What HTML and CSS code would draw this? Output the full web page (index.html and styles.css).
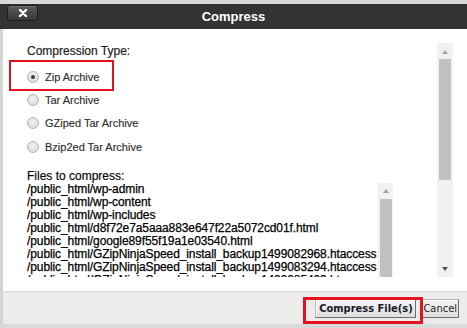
FILE: index.html
```html
<!DOCTYPE html>
<html>
<head>
<meta charset="utf-8">
<title>Compress</title>
<link rel="stylesheet" href="styles.css">
</head>
<body>
<div class="dialog">
  <header class="titlebar">
    <button class="close" type="button" aria-label="Close">
      <svg width="10" height="10" viewBox="0 0 10 10"><path d="M2 2 L8 8 M8 2 L2 8" stroke="#fff" stroke-width="2.4" stroke-linecap="round"/></svg>
    </button>
    <h1 class="title">Compress</h1>
    <span class="spacer"></span>
  </header>
  <main class="body">
    <div class="scroller">
      <div class="content">
        <p class="heading">Compression Type:</p>
        <ul class="options">
          <li class="option"><span class="radio checked"></span><span class="label">Zip Archive</span></li>
          <li class="option"><span class="radio"></span><span class="label">Tar Archive</span></li>
          <li class="option"><span class="radio"></span><span class="label">GZiped Tar Archive</span></li>
          <li class="option"><span class="radio"></span><span class="label">Bzip2ed Tar Archive</span></li>
        </ul>
        <p class="heading files-heading">Files to compress:</p>
        <div class="filebox">
          <ul class="files">
            <li>/public_html/wp-admin</li>
            <li>/public_html/wp-content</li>
            <li>/public_html/wp-includes</li>
            <li>/public_html/d8f72e7a5aaa883e647f22a5072cd01f.html</li>
            <li>/public_html/google89f55f19a1e03540.html</li>
            <li>/public_html/GZipNinjaSpeed_install_backup1499082968.htaccess</li>
            <li>/public_html/GZipNinjaSpeed_install_backup1499083294.htaccess</li>
            <li>/public_html/GZipNinjaSpeed_install_backup1499085409.htaccess</li>
            <li>/public_html/.htaccess</li>
          </ul>
          <div class="vscroll inner">
            <span class="arrow up"></span>
            <span class="thumb"></span>
          </div>
        </div>
      </div>
      <div class="vscroll outer">
        <span class="arrow up"></span>
        <span class="thumb"></span>
        <span class="fill"></span>
        <span class="arrow down"></span>
      </div>
    </div>
  </main>
  <footer class="footer">
    <button class="btn primary" type="button">Compress File(s)</button>
    <button class="btn" type="button">Cancel</button>
  </footer>
</div>
<div class="annot annot-zip"></div>
<div class="annot annot-submit"></div>
</body>
</html>
```
FILE: styles.css
```css
html, body {
  margin: 0;
  padding: 0;
}
body {
  width: 467px;
  height: 328px;
  overflow: hidden;
  position: relative;
  background: #d9d9d9;
  font-family: "Liberation Sans", Arial, sans-serif;
}
.dialog {
  margin-top: 4px;
  height: 320px;
  display: flex;
  flex-direction: column;
}
.titlebar {
  height: 25px;
  flex: none;
  background: #333333;
  display: grid;
  grid-template-columns: 40px 1fr 40px;
  align-items: start;
}
.close {
  margin: 1px 0 0 7px;
  width: 31px;
  height: 16px;
  padding: 0;
  border: 1px solid #1c1c1c;
  border-radius: 3px;
  background: linear-gradient(#5a5a5a, #383838);
  box-shadow: inset 0 1px 0 rgba(255,255,255,0.15);
  display: flex;
  align-items: center;
  justify-content: center;
}
.close svg {
  display: block;
}
.title {
  margin: 0;
  text-align: center;
  color: #ffffff;
  font-size: 13px;
  font-weight: bold;
  line-height: 25px;
}
.body {
  height: 262px;
  flex: none;
  box-sizing: border-box;
  background: #ffffff;
  border-left: 3px solid #d4d4d4;
  padding: 14px 14px 0 0;
}
.scroller {
  height: 234px;
  display: flex;
  overflow: hidden;
}
.content {
  flex: 1;
  min-width: 0;
  padding: 2px 0 0 24px;
  overflow: hidden;
}
.heading {
  margin: 0;
  font-size: 12px;
  line-height: 13px;
  color: #1e1e1e;
  -webkit-text-stroke: 0.2px #1e1e1e;
}
.options {
  list-style: none;
  margin: 7px 0 0;
  padding: 0;
}
.option {
  height: 23.4px;
  display: flex;
  align-items: center;
}
.radio {
  width: 12px;
  height: 12px;
  box-sizing: border-box;
  border-radius: 50%;
  border: 1px solid #b4b4b4;
  background: radial-gradient(circle at 50% 35%, #f2f2f2, #d6d6d6);
  margin-right: 6px;
  display: flex;
  align-items: center;
  justify-content: center;
}
.radio.checked::after {
  content: "";
  width: 4px;
  height: 4px;
  border-radius: 50%;
  background: #3a3a3a;
}
.label {
  font-size: 11px;
  color: #2e2e2e;
  -webkit-text-stroke: 0.15px #2e2e2e;
}
.files-heading {
  margin-top: 11px;
  color: #000000;
}
.filebox {
  width: 366px;
  height: 130px;
  display: flex;
}
.files {
  flex: 1;
  min-width: 0;
  list-style: none;
  margin: 0;
  padding: 0;
  font-size: 12px;
  line-height: 13px;
  letter-spacing: -0.1px;
  color: #000000;
  -webkit-text-stroke: 0.25px #000000;
  white-space: nowrap;
  overflow: hidden;
}
.vscroll {
  background: #f1f1f1;
  display: flex;
  flex-direction: column;
  align-items: center;
  flex: none;
}
.vscroll.inner {
  width: 15px;
}
.vscroll.outer {
  width: 16px;
}
.arrow {
  width: 0;
  height: 0;
  border-left: 3.5px solid transparent;
  border-right: 3.5px solid transparent;
}
.arrow.up {
  margin-top: 6px;
  border-bottom: 4px solid #a3a3a3;
}
.outer .arrow.up {
  margin-top: 7px;
}
.arrow.down {
  margin-bottom: 6px;
  border-top: 4px solid #505050;
}
.thumb {
  width: 12px;
  background: #c1c1c1;
}
.inner .thumb {
  margin-top: 6px;
  flex: 1;
}
.outer .thumb {
  margin-top: 5px;
  height: 121px;
}
.fill {
  flex: 1;
}
.footer {
  flex: 1;
  box-sizing: border-box;
  background: #ececec;
  border-top: 1px solid #dadada;
  border-left: 3px solid #d4d4d4;
  display: flex;
  justify-content: flex-end;
  align-items: flex-start;
  gap: 5px;
  padding: 7px 8px 0 0;
}
.btn {
  height: 19px;
  box-sizing: border-box;
  margin: 0;
  padding: 0 1px;
  border: 1px solid #8a8a8a;
  border-color: #b8b8b8 #6e6e6e #6e6e6e #b8b8b8;
  background: linear-gradient(#f4f4f4, #dedede);
  box-shadow: inset 1px 1px 0 #ffffff;
  font-family: "DejaVu Sans Condensed", "DejaVu Sans", sans-serif;
  font-stretch: condensed;
  font-size: 11px;
  line-height: 16px;
  color: #222222;
}
.btn.primary {
  width: 101px;
  font-weight: bold;
  color: #1a1a2a;
  padding: 0 2px;
}
.annot {
  position: absolute;
  box-sizing: border-box;
  border: 2px solid #e3121c;
}
.annot-zip {
  left: 9px;
  top: 60px;
  width: 105px;
  height: 31px;
}
.annot-submit {
  left: 303px;
  top: 297px;
  width: 120px;
  height: 27px;
  border-width: 3px;
}
```
